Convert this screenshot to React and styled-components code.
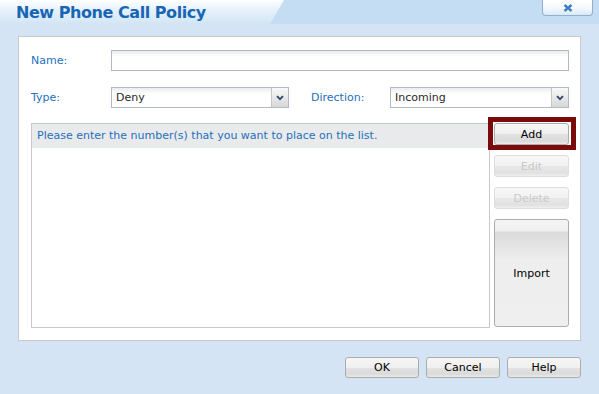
import React from 'react';
import styled, { createGlobalStyle } from 'styled-components';

const GlobalStyle = createGlobalStyle`
  html, body {
    margin: 0;
    padding: 0;
    background: #d5e4f4;
  }
  body {
    font-family: "DejaVu Sans", Verdana, sans-serif;
    font-size: 11px;
  }
`;

const Dialog = styled.div`
  width: 599px;
  height: 394px;
  display: flex;
  flex-direction: column;
  background: #d5e4f4;
`;

const TitleBar = styled.div`
  position: relative;
  height: 24px;
  display: flex;
  justify-content: space-between;
  align-items: flex-start;
  background: #c4ddf2;
  overflow: hidden;

  &::before {
    content: '';
    position: absolute;
    inset: 0;
    background: linear-gradient(to bottom, #ffffff 0%, #eaf3fb 35%, #d2e5f5 100%);
    clip-path: polygon(0 0, 284px 0, 270px 100%, 0 100%);
  }
`;

const Title = styled.h1`
  position: relative;
  margin: 0;
  padding: 3px 0 0 16px;
  font-family: "DejaVu Sans", Verdana, sans-serif;
  font-weight: bold;
  font-size: 16px;
  letter-spacing: -0.45px;
  color: #1766b5;
  line-height: 20px;
`;

const CloseButton = styled.button`
  position: relative;
  width: 51px;
  height: 16px;
  margin-right: 6px;
  padding: 0;
  border: 1px solid #92afd0;
  border-top: none;
  border-radius: 0 0 4px 4px;
  background: linear-gradient(to bottom, #ffffff 0%, #f4f8fc 55%, #dbe9f6 100%);
  display: flex;
  align-items: center;
  justify-content: center;
`;

const Panel = styled.div`
  margin: 12px 18px 0;
  height: 305px;
  box-sizing: border-box;
  border: 1px solid #c9c9c9;
  background: #ffffff;
  padding: 13px 11px 12px 12px;
  display: flex;
  flex-direction: column;
`;

const FieldRow = styled.div`
  display: flex;
  align-items: center;
  height: 21px;
  margin-bottom: ${p => p.$spacing || 0}px;
`;

const Label = styled.label`
  width: ${p => p.$width}px;
  flex: none;
  color: #2470bd;
`;

const TextInput = styled.input`
  flex: 1;
  height: 21px;
  box-sizing: border-box;
  border: 1px solid #b3b7cb;
  background: linear-gradient(to bottom, #ececec 0, #ffffff 6px);
  font: inherit;
  outline: none;
`;

const Select = styled.div`
  display: flex;
  height: 21px;
  box-sizing: border-box;
  border: 1px solid #b3b7cb;
  background: linear-gradient(to bottom, #ececec 0, #ffffff 6px);
  ${p => (p.$width ? `width: ${p.$width}px; flex: none;` : 'flex: 1;')}
  margin-right: ${p => p.$gap || 0}px;
`;

const SelectValue = styled.span`
  flex: 1;
  padding-left: 4px;
  line-height: 19px;
  color: #2a2a2a;
`;

const SelectArrow = styled.span`
  width: 16px;
  flex: none;
  border-left: 1px solid #c4c4c4;
  background: linear-gradient(to bottom, #f7f7f7 0%, #e9e9e9 50%, #d6d6d6 100%);
  display: flex;
  align-items: center;
  justify-content: center;
`;

const ListArea = styled.div`
  display: flex;
  height: 205px;
  margin-top: 15px;
  gap: 4px;
`;

const ListBox = styled.div`
  width: 459px;
  box-sizing: border-box;
  border: 1px solid #c9c9c9;
  background: #ffffff;
`;

const ListHeader = styled.div`
  height: 24px;
  background: #e9eaeb;
  padding-left: 5px;
  line-height: 24px;
  color: #2470bd;
  white-space: nowrap;
`;

const ButtonColumn = styled.div`
  width: 75px;
  display: flex;
  flex-direction: column;
  gap: 10px;
`;

const Button = styled.button`
  position: relative;
  flex: none;
  width: ${p => p.$width || 75}px;
  height: ${p => p.$height || 22}px;
  box-sizing: border-box;
  padding: 0;
  border: 1px solid ${p => (p.disabled ? '#d6d6d6' : '#acacac')};
  border-radius: 3px;
  font-family: "DejaVu Sans", Verdana, sans-serif;
  font-size: 11px;
  color: ${p => (p.disabled ? '#bcbcbc' : '#000000')};
  background: ${p =>
    p.$tall
      ? 'linear-gradient(to bottom, #f4f4f4 0, #f0f0f0 11px, #dadada 12px, #eeeeee 40px, #efefef 100%)'
      : 'linear-gradient(to bottom, #f6f6f6 0%, #efefef 50%, #e2e2e2 52%, #dadada 85%, #ececec 100%)'};
  ${p => p.disabled && 'opacity: 0.8;'}

  ${p =>
    p.$highlight &&
    `&::after {
      content: '';
      position: absolute;
      top: -7px;
      left: -7px;
      right: -8px;
      bottom: -6px;
      border: 5px solid #7b0a0a;
      pointer-events: none;
    }`}
`;

const Footer = styled.div`
  display: flex;
  justify-content: flex-end;
  gap: 7px;
  padding: 16px 18px 0 0;
`;

function Chevron() {
  return (
    <svg width="8" height="6" viewBox="0 0 8 6">
      <path d="M1 1.2 L4 4.2 L7 1.2" fill="none" stroke="#34496e" strokeWidth="1.9" />
    </svg>
  );
}

function CloseIcon() {
  return (
    <svg width="10" height="8" viewBox="0 0 10 8">
      <path d="M1.5 1 L8.5 7 M8.5 1 L1.5 7" stroke="#3a7fc5" strokeWidth="2.4" strokeLinecap="butt" />
    </svg>
  );
}

export default function App() {
  return (
    <Dialog>
      <GlobalStyle />
      <TitleBar>
        <Title>New Phone Call Policy</Title>
        <CloseButton aria-label="Close"><CloseIcon /></CloseButton>
      </TitleBar>

      <Panel>
        <FieldRow $spacing={16}>
          <Label $width={80}>Name:</Label>
          <TextInput />
        </FieldRow>

        <FieldRow>
          <Label $width={80}>Type:</Label>
          <Select $width={178} $gap={22}>
            <SelectValue>Deny</SelectValue>
            <SelectArrow><Chevron /></SelectArrow>
          </Select>
          <Label $width={79}>Direction:</Label>
          <Select>
            <SelectValue>Incoming</SelectValue>
            <SelectArrow><Chevron /></SelectArrow>
          </Select>
        </FieldRow>

        <ListArea>
          <ListBox>
            <ListHeader>Please enter the number(s) that you want to place on the list.</ListHeader>
          </ListBox>
          <ButtonColumn>
            <Button $highlight>Add</Button>
            <Button disabled>Edit</Button>
            <Button disabled>Delete</Button>
            <Button $tall $height={108}>Import</Button>
          </ButtonColumn>
        </ListArea>
      </Panel>

      <Footer>
        <Button $width={74} $height={21}>OK</Button>
        <Button $width={74} $height={21}>Cancel</Button>
        <Button $width={74} $height={21}>Help</Button>
      </Footer>
    </Dialog>
  );
}
